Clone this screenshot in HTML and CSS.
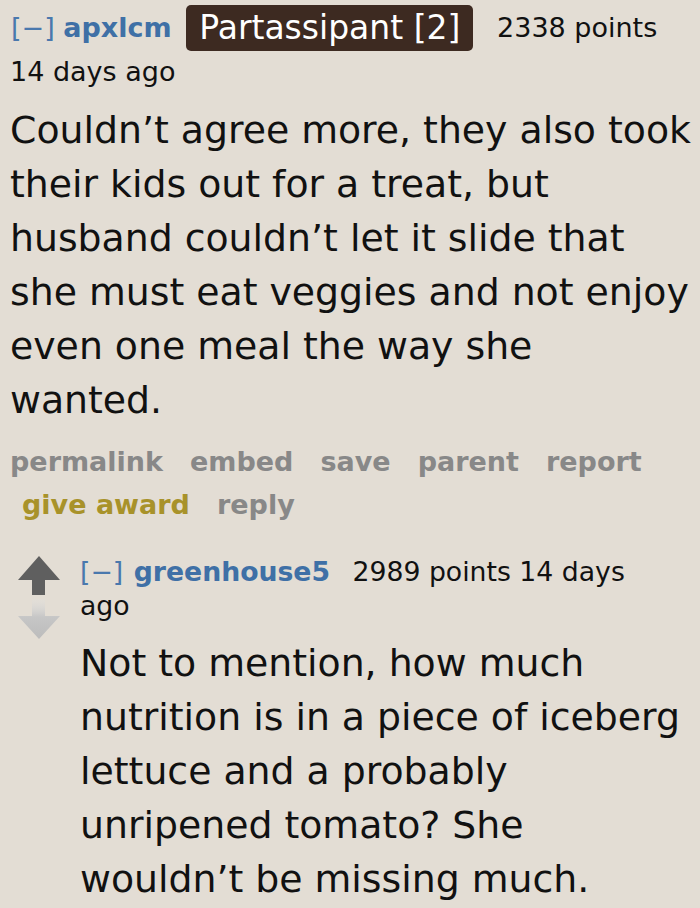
FILE: index.html
```html
<!DOCTYPE html>
<html>
<head>
<meta charset="utf-8">
<link rel="stylesheet" href="styles.css">
</head>
<body>
<div class="comment">
  <div class="tagline">
    <span class="expand">[−]</span>
    <span class="author">apxlcm</span>
    <span class="flair">Partassipant [2]</span>
    <span class="score">2338 points</span>
    <span class="time">14 days ago</span>
  </div>
  <div class="body">Couldn’t agree more, they also took their kids out for a treat, but husband couldn’t let it slide that she must eat veggies and not enjoy even one meal the way she wanted.</div>
  <ul class="buttons">
    <li>permalink</li>
    <li>embed</li>
    <li>save</li>
    <li>parent</li>
    <li>report</li>
    <li class="award">give award</li>
    <li>reply</li>
  </ul>
  <div class="child">
    <div class="arrows">
      <svg class="up" width="42" height="39" viewBox="0 0 42 39"><path d="M21 0 L42 24 L27 24 L27 39 L14 39 L14 24 L0 24 Z" fill="#5f5f5f"/></svg>
      <svg class="down" width="42" height="40" viewBox="0 0 42 40"><defs><linearGradient id="g" x1="0" y1="0" x2="0" y2="1"><stop offset="0" stop-color="#e0e0e0" stop-opacity="0.2"/><stop offset="0.45" stop-color="#c6c6c6"/><stop offset="1" stop-color="#bcbcbc"/></linearGradient></defs><path d="M14 0 L27 0 L27 17 L42 17 L21 40 L0 17 L14 17 Z" fill="url(#g)"/></svg>
    </div>
    <div class="entry">
      <div class="tagline small"><span class="expand">[−]</span> <span class="author">greenhouse5</span> <span class="score">2989 points</span> 14 days ago</div>
      <div class="body">Not to mention, how much nutrition is in a piece of iceberg lettuce and a probably unripened tomato? She wouldn’t be missing much.</div>
    </div>
  </div>
</div>
</body>
</html>
```

FILE: styles.css
```css
html, body {
  margin: 0;
  padding: 0;
  background: #e3ddd4;
}
body {
  font-family: "DejaVu Sans", Verdana, sans-serif;
  color: #111;
  width: 700px;
  height: 908px;
  overflow: hidden;
}
.comment {
  padding: 5px 0 0 10px;
}
.tagline {
  font-size: 27px;
  line-height: 46px;
}
.expand {
  color: #4a78ad;
  margin-left: 1px;
}
.author {
  color: #3f70a6;
  font-weight: bold;
}
.flair {
  display: inline-block;
  background: #3d2a21;
  color: #fff;
  font-size: 33px;
  line-height: 46px;
  padding: 0 13px;
  border-radius: 5px;
  margin-left: 6px;
  vertical-align: top;
}
.score {
  margin-left: 15px;
}
.time {
  display: block;
  line-height: 40px;
  position: relative;
  top: 1px;
}
.body {
  font-size: 37.8px;
  line-height: 54px;
  margin-top: 12px;
  padding-right: 5px;
}
.buttons {
  list-style: none;
  margin: 13px 0 0;
  padding: 0;
  display: flex;
  flex-wrap: wrap;
  column-gap: 27px;
  row-gap: 0;
  font-weight: bold;
  font-size: 27px;
  line-height: 43px;
  color: #888;
}
.buttons .award {
  color: #a8922a;
  margin-left: 12px;
}
.child {
  display: flex;
  margin-top: 29px;
}
.arrows {
  display: flex;
  flex-direction: column;
  align-items: center;
  flex: none;
  width: 42px;
  margin: 1px 0 0 8px;
  gap: 4px;
}
.entry {
  margin-left: 20px;
  min-width: 0;
}
.tagline.small {
  font-size: 26.7px;
  line-height: 34px;
  padding-right: 40px;
}
.tagline.small .expand {
  margin-left: 0;
}
.tagline.small .author {
  margin-left: 2px;
}
.tagline.small .score {
  margin-left: 14px;
}
.entry .body {
  margin-top: 13px;
  padding-right: 10px;
}
```
